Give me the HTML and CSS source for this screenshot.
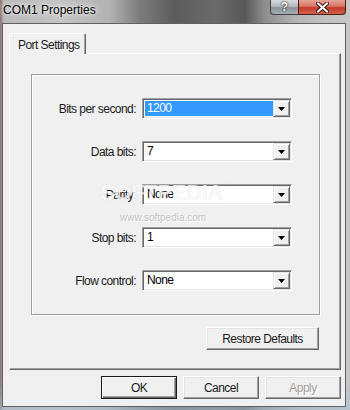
FILE: index.html
```html
<!DOCTYPE html>
<html lang="en">
<head>
  <meta charset="UTF-8">
  <meta name="viewport" content="width=device-width, initial-scale=1">
  <title>COM1 Properties</title>
  <link rel="stylesheet" href="styles.css">
</head>
<body>
  <div class="window">
    <div class="titlebar">
      <span class="title">COM1 Properties</span>
      <div class="caption-buttons">
        <span class="cap help">?</span>
        <span class="cap close">
          <svg width="13" height="11" viewBox="0 0 13 11">
            <path d="M2 1.5 L11 9.5 M11 1.5 L2 9.5" stroke="#3a1a14" stroke-width="4" stroke-linecap="square"/>
            <path d="M2 1.5 L11 9.5 M11 1.5 L2 9.5" stroke="#fff" stroke-width="2" stroke-linecap="square"/>
          </svg>
        </span>
      </div>
    </div>

    <div class="client">
      <div class="tabs">
        <div class="tab">Port Settings</div>
      </div>

      <div class="page">
        <div class="group">
          <div class="form">
            <label>Bits per second:</label>
            <div class="combo">
              <span class="value selected">1200</span>
              <span class="arrow"><svg width="7" height="4" viewBox="0 0 7 4"><polygon points="0,0 7,0 3.5,4" fill="#000"/></svg></span>
            </div>

            <label>Data bits:</label>
            <div class="combo">
              <span class="value">7</span>
              <span class="arrow"><svg width="7" height="4" viewBox="0 0 7 4"><polygon points="0,0 7,0 3.5,4" fill="#000"/></svg></span>
            </div>

            <label>Parity:</label>
            <div class="combo">
              <span class="value">None</span>
              <span class="arrow"><svg width="7" height="4" viewBox="0 0 7 4"><polygon points="0,0 7,0 3.5,4" fill="#000"/></svg></span>
            </div>

            <label>Stop bits:</label>
            <div class="combo">
              <span class="value">1</span>
              <span class="arrow"><svg width="7" height="4" viewBox="0 0 7 4"><polygon points="0,0 7,0 3.5,4" fill="#000"/></svg></span>
            </div>

            <label>Flow control:</label>
            <div class="combo">
              <span class="value">None</span>
              <span class="arrow"><svg width="7" height="4" viewBox="0 0 7 4"><polygon points="0,0 7,0 3.5,4" fill="#000"/></svg></span>
            </div>
          </div>
        </div>

        <div class="page-actions">
          <button class="btn restore">Restore Defaults</button>
        </div>
      </div>

      <div class="actions">
        <button class="btn default">OK</button>
        <button class="btn">Cancel</button>
        <button class="btn" disabled>Apply</button>
      </div>
    </div>

    <div class="watermark">SOFTPEDIA<sup>™</sup></div>
    <div class="watermark-url">www.softpedia.com</div>
  </div>
</body>
</html>
```

FILE: styles.css
```css
body {
  margin: 0;
  font-family: "Liberation Sans", Arial, sans-serif;
  font-size: 12px;
  background: #9aa3ab;
}

.window {
  position: relative;
  width: 350px;
  height: 410px;
  display: flex;
  flex-direction: column;
  background:
    linear-gradient(to bottom, rgba(255, 255, 255, 0) 0, rgba(255, 255, 255, 0) 380px, rgba(170, 190, 210, 0.6) 410px),
    linear-gradient(to right, #8a7272 0, #b8b8b8 4px, #c4c4c4 60px, #b2b2b2 110px, #7c7c7c 140px, #5c5c5c 175px, #6a6a6a 215px, #585858 245px, #8e8e8e 265px, #b8b8b8 300px, #c8c8c8 350px);
  overflow: hidden;
}

/* title bar */

.titlebar {
  height: 23px;
  display: flex;
  justify-content: space-between;
  align-items: flex-start;
}

.title {
  padding: 3px 0 0 3px;
  line-height: 14px;
  color: #000;
  text-shadow: 0 0 6px #fff, 0 0 3px rgba(255, 255, 255, 0.9);
}

.caption-buttons {
  display: flex;
  margin-right: 4px;
}

.cap {
  height: 14px;
  display: flex;
  align-items: center;
  justify-content: center;
  border: 1px solid #3e4246;
  border-top: none;
}

.help {
  width: 27px;
  border-radius: 0 0 0 4px;
  border-right: none;
  background: linear-gradient(to bottom, #d6dade 0, #b4babf 45%, #8b9297 55%, #a7aeb3 100%);
  color: #fff;
  font-weight: bold;
  font-size: 12px;
  text-shadow: 0 0 2px #222, 0 0 1px #222;
}

.close {
  width: 46px;
  border-radius: 0 0 4px 0;
  border-color: #4a1c16;
  background: linear-gradient(to bottom, #e7a596 0, #d67563 45%, #c2392a 55%, #d5614d 100%);
}

/* client area */

.client {
  flex: 1;
  margin: 0 4px 3px 2px;
  border: 1px solid #5e6266;
  background: #f0f0f0;
  display: flex;
  flex-direction: column;
  color: #1a1a1a;
  letter-spacing: -0.55px;
}

.tabs {
  display: flex;
  padding: 9px 0 0 6px;
}

.tab {
  box-sizing: border-box;
  width: 77px;
  height: 21px;
  margin-bottom: -1px;
  padding: 4px 0 0 8px;
  background: #f0f0f0;
  border: 1px solid #fff;
  border-right: 1px solid #696969;
  border-bottom: none;
  border-radius: 2px 2px 0 0;
  box-shadow: inset -1px 0 0 #a0a0a0;
  position: relative;
  z-index: 1;
}

.page {
  box-sizing: border-box;
  width: 332px;
  height: 317px;
  margin-left: 6px;
  padding: 20px 0 0 21px;
  border: 1px solid;
  border-color: #fff #696969 #696969 #fff;
  box-shadow: inset -1px -1px 0 #a0a0a0;
  display: flex;
  flex-direction: column;
}

.group {
  box-sizing: border-box;
  width: 289px;
  height: 241px;
  border: 1px solid #a0a0a0;
  box-shadow: 1px 1px 0 #fff, inset 1px 1px 0 #fff;
}

.form {
  display: grid;
  grid-template-columns: 104px 150px;
  grid-auto-rows: 21px;
  column-gap: 6px;
  row-gap: 22px;
  padding-top: 23px;
}

.form label {
  align-self: center;
  text-align: right;
  padding-top: 1px;
}

.combo {
  box-sizing: border-box;
  display: flex;
  padding: 1px;
  border: 1px solid;
  border-color: #a0a0a0 #fff #fff #a0a0a0;
  box-shadow: inset 1px 1px 0 #696969, inset -1px -1px 0 #e3e3e3;
  background: #fff;
}

.value {
  flex: 1;
  margin: 1px 0 1px 1px;
  padding-left: 2px;
  line-height: 15px;
  color: #000;
}

.value.selected {
  background: #3399ff;
  color: #fff;
}

.arrow {
  box-sizing: border-box;
  width: 17px;
  display: flex;
  align-items: center;
  justify-content: center;
  background: #f0f0f0;
  border: 1px solid;
  border-color: #e3e3e3 #696969 #696969 #e3e3e3;
  box-shadow: inset 1px 1px 0 #fff, inset -1px -1px 0 #a0a0a0;
}

.page-actions {
  display: flex;
  justify-content: flex-end;
  padding: 12px 21px 0 0;
}

/* buttons */

.btn {
  box-sizing: border-box;
  width: 76px;
  height: 23px;
  padding: 0;
  font-family: inherit;
  font-size: 12px;
  letter-spacing: -0.55px;
  color: #1a1a1a;
  background: #f0f0f0;
  border: 1px solid;
  border-color: #fff #696969 #696969 #fff;
  box-shadow: inset -1px -1px 0 #a0a0a0, inset 1px 1px 0 #e3e3e3;
}

.btn.restore {
  width: 113px;
}

.btn.default {
  border-color: #1a1a1a;
  box-shadow: inset 1px 1px 0 #fff, inset -1px -1px 0 #696969, inset -2px -2px 0 #a0a0a0;
}

.btn:disabled {
  color: #a0a0a0;
  text-shadow: 1px 1px 0 #fff;
}

.actions {
  display: flex;
  justify-content: flex-end;
  gap: 6px;
  padding: 6px 4px 0 0;
}

/* softpedia watermark over the dialog */

.watermark {
  position: absolute;
  left: 100px;
  top: 180px;
  font-size: 22px;
  font-weight: bold;
  letter-spacing: -0.3px;
  color: rgba(255, 255, 255, 0.8);
  text-shadow: 0 0 1px rgba(0, 0, 0, 0.12);
  pointer-events: none;
}

.watermark sup {
  font-size: 6px;
  font-weight: normal;
  vertical-align: 14px;
}

.watermark-url {
  position: absolute;
  left: 120px;
  top: 212px;
  font-size: 10px;
  color: #c4c4c4;
  text-shadow: 1px 1px 0 #fff;
  pointer-events: none;
}
```
